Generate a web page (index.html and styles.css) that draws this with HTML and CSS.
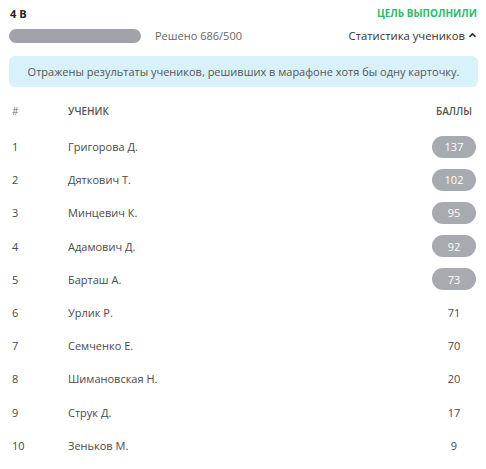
FILE: index.html
```html
<!DOCTYPE html>
<html lang="ru">
<head>
<meta charset="utf-8">
<link rel="stylesheet" href="styles.css">
</head>
<body>
<div class="page">
  <div class="top">
    <div class="title">4 В</div>
    <div class="goal">ЦЕЛЬ ВЫПОЛНИЛИ</div>
  </div>
  <div class="progress-row">
    <div class="bar"></div>
    <div class="solved">Решено 686/500</div>
    <div class="stats">Статистика учеников
      <svg class="chev" width="7" height="6" viewBox="0 0 7 6"><path d="M1 4.4 L3.5 1.9 L6 4.4" fill="none" stroke="#333" stroke-width="1.6" stroke-linecap="round" stroke-linejoin="round"/></svg>
    </div>
  </div>
  <div class="info">Отражены результаты учеников, решивших в марафоне хотя бы одну карточку.</div>
  <div class="table">
    <div class="row head"><span class="num">#</span><span class="name">УЧЕНИК</span><span class="score">БАЛЛЫ</span></div>
    <div class="row"><span class="num">1</span><span class="name">Григорова Д.</span><span class="score"><span class="badge">137</span></span></div>
    <div class="row"><span class="num">2</span><span class="name">Дяткович Т.</span><span class="score"><span class="badge">102</span></span></div>
    <div class="row"><span class="num">3</span><span class="name">Минцевич К.</span><span class="score"><span class="badge">95</span></span></div>
    <div class="row"><span class="num">4</span><span class="name">Адамович Д.</span><span class="score"><span class="badge">92</span></span></div>
    <div class="row"><span class="num">5</span><span class="name">Барташ А.</span><span class="score"><span class="badge">73</span></span></div>
    <div class="row"><span class="num">6</span><span class="name">Урлик Р.</span><span class="score">71</span></div>
    <div class="row"><span class="num">7</span><span class="name">Семченко Е.</span><span class="score">70</span></div>
    <div class="row"><span class="num">8</span><span class="name">Шимановская Н.</span><span class="score">20</span></div>
    <div class="row"><span class="num">9</span><span class="name">Струк Д.</span><span class="score">17</span></div>
    <div class="row"><span class="num">10</span><span class="name">Зеньков М.</span><span class="score">9</span></div>
  </div>
</div>
</body>
</html>
```

FILE: styles.css
```css
* { box-sizing: border-box; }
html, body { margin: 0; padding: 0; background: #fff; }
body { font-family: "Open Sans", "Noto Sans", sans-serif; color: #555; }
.page { padding: 5px 8px 0 9px; width: 486px; }
.top { display: flex; justify-content: space-between; align-items: center; height: 16px; }
.title { font-size: 11px; font-weight: 700; color: #222; padding-left: 1px; }
.goal { font-size: 10px; font-weight: 700; color: #2dbb6a; padding-right: 1px; }
.progress-row { display: flex; align-items: center; margin-top: 7px; height: 15px; }
.bar { width: 132px; height: 14px; border-radius: 7px; background: #a0a3a9; }
.solved { margin-left: 14px; font-size: 11px; color: #666; }
.stats { margin-left: auto; font-size: 11.3px; color: #333; display: flex; align-items: center; gap: 4px; padding-right: 2px; }
.chev { margin-top: -1px; }
.info { margin-top: 13px; height: 31px; border-radius: 6px; background: #d9f1fb; font-size: 11px; color: #555; display: flex; align-items: center; justify-content: center; width: 469px; white-space: nowrap; }
.table { margin-top: 11px; }
.row { display: grid; grid-template-columns: 56px 1fr 44px; align-items: center; height: 33.2px; padding-left: 3px; width: 467px; font-size: 11px; color: #4a4a4a; }
.row.head { height: 26px; margin-bottom: 6px; font-size: 10px; font-weight: 600; color: #555; }
.row.head .num { font-weight: 400; color: #777; font-size: 10px; }
.score { text-align: center; }
.badge { display: inline-flex; align-items: center; justify-content: center; width: 44px; height: 22px; border-radius: 11px; background: #a7aab0; color: #fff; font-size: 11px; }
```
